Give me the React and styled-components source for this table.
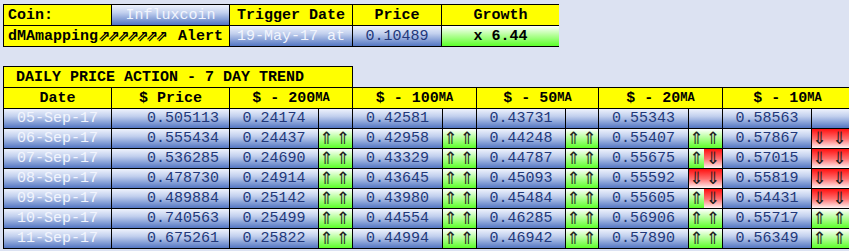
import styled, { createGlobalStyle, css } from 'styled-components';

const GlobalStyle = createGlobalStyle`
  html, body {
    margin: 0;
    background: #dce2f2;
    overflow: hidden;
  }
  body {
    font-family: 'Liberation Mono', 'Courier New', monospace;
    font-size: 15px;
  }
`;

const tones = {
  yellow: css`background: #ffff00;`,
  blue: css`background: linear-gradient(180deg, #eef2fc 0%, #c2d0ee 38%, #5376c2 100%);`,
  green: css`background: linear-gradient(180deg, #ffffff 0%, #b6ff9a 45%, #5cff2a 100%);`,
  red: css`background: linear-gradient(180deg, #ff1010 0%, #ff6a6a 50%, #fff2f2 100%);`,
};

const Page = styled.div`
  padding: 4px 0 0 3px;
  display: flex;
  flex-direction: column;
  gap: 19px;
`;

const SummaryGrid = styled.div`
  display: grid;
  grid-template-columns: 107px 117px 122px 88px 117px;
  grid-auto-rows: 20px;
  gap: 1px;
  padding: 1px 0 1px 1px;
  background: #000;
  width: fit-content;
`;

const TrendBlock = styled.div`
  display: flex;
  flex-direction: column;
`;

const TrendTitle = styled.div`
  width: 350px;
  height: 21px;
  box-sizing: border-box;
  border: 1px solid #000;
  border-bottom: none;
  background: #ffff00;
  font-weight: bold;
  padding-left: 12px;
  display: flex;
  align-items: center;
  white-space: pre;
`;

const TrendGrid = styled.div`
  display: grid;
  grid-template-columns: 107px 117px 88px 33px 89px 33px 88px 32px 89px 33px 88px 40px;
  grid-template-rows: 20px;
  grid-auto-rows: 19px;
  gap: 1px;
  padding: 1px 0 1px 1px;
  background: #000;
  width: fit-content;
`;

const Cell = styled.div`
  ${({ $tone }) => tones[$tone || 'yellow']}
  grid-column: span ${({ $span }) => $span || 1};
  display: flex;
  align-items: center;
  justify-content: ${({ $align }) =>
    $align === 'left' ? 'flex-start' : $align === 'right' ? 'flex-end' : 'center'};
  padding: ${({ $align }) => ($align === 'left' ? '0 0 0 4px' : $align === 'right' ? '0 10px 0 0' : '0')};
  font-weight: ${({ $bold }) => ($bold ? 'bold' : 'normal')};
  color: ${({ $ink }) => ($ink === 'light' ? '#f2f5fd' : $ink === 'navy' ? '#22387a' : '#000')};
  white-space: pre;
  overflow: hidden;
`;

const Small = styled.span`
  font-size: 12px;
`;

const AlertArrows = styled.span`
  font-family: 'DejaVu Sans', sans-serif;
  font-size: 15px;
  font-weight: bold;
  letter-spacing: -3px;
  line-height: 18px;
  margin-right: 4px;
`;

const ArrowCell = styled.div`
  display: flex;
  ${tones.blue}
`;

const Half = styled.div`
  ${({ $dir }) => ($dir === 'u' ? tones.green : $dir === 'd' ? tones.red : '')}
  flex: ${({ $first }) => ($first ? '0 0 15px' : '1')};
  display: flex;
  align-items: center;
  justify-content: center;
  font-family: 'DejaVu Sans', sans-serif;
  font-size: 17px;
  line-height: 19px;
  color: #1e1e1e;
`;

const glyph = { u: '⇑', d: '⇓' };

const Arrows = ({ pair }) => (
  <ArrowCell>
    {pair && (
      <>
        <Half $first $dir={pair[0]}>{glyph[pair[0]]}</Half>
        <Half $dir={pair[1]}>{glyph[pair[1]]}</Half>
      </>
    )}
  </ArrowCell>
);

const rows = [
  ['05-Sep-17', '0.505113', ['0.24174', null], ['0.42581', null], ['0.43731', null], ['0.55343', null], ['0.58563', null]],
  ['06-Sep-17', '0.555434', ['0.24437', 'uu'], ['0.42958', 'uu'], ['0.44248', 'uu'], ['0.55407', 'uu'], ['0.57867', 'dd']],
  ['07-Sep-17', '0.536285', ['0.24690', 'uu'], ['0.43329', 'uu'], ['0.44787', 'uu'], ['0.55675', 'ud'], ['0.57015', 'dd']],
  ['08-Sep-17', '0.478730', ['0.24914', 'uu'], ['0.43645', 'uu'], ['0.45093', 'uu'], ['0.55592', 'dd'], ['0.55819', 'dd']],
  ['09-Sep-17', '0.489884', ['0.25142', 'uu'], ['0.43980', 'uu'], ['0.45484', 'uu'], ['0.55605', 'ud'], ['0.54431', 'dd']],
  ['10-Sep-17', '0.740563', ['0.25499', 'uu'], ['0.44554', 'uu'], ['0.46285', 'uu'], ['0.56906', 'uu'], ['0.55717', 'uu']],
  ['11-Sep-17', '0.675261', ['0.25822', 'uu'], ['0.44994', 'uu'], ['0.46942', 'uu'], ['0.57890', 'uu'], ['0.56349', 'uu']],
];

const averages = ['200', '100', '50', '20', '10'];

export default function App() {
  return (
    <>
      <GlobalStyle />
      <Page>
        <SummaryGrid>
          <Cell $align="left" $bold>Coin:</Cell>
          <Cell $tone="blue" $ink="light">Influxcoin</Cell>
          <Cell $bold>Trigger Date</Cell>
          <Cell $bold>Price</Cell>
          <Cell $bold>Growth</Cell>
          <Cell $span={2} $align="left" $bold>
            dMAmapping<AlertArrows>⇗⇗⇗⇗⇗⇗⇗</AlertArrows> Alert
          </Cell>
          <Cell $tone="blue" $ink="light">19-May-17 at</Cell>
          <Cell $tone="blue" $ink="navy">0.10489</Cell>
          <Cell $tone="green" $bold>x 6.44</Cell>
        </SummaryGrid>

        <TrendBlock>
          <TrendTitle>DAILY PRICE ACTION - 7 DAY TREND</TrendTitle>
          <TrendGrid>
            <Cell $bold>Date</Cell>
            <Cell $bold>$ Price</Cell>
            {averages.map((n) => (
              <Cell key={n} $span={2} $bold>
                $ - {n}<Small>MA</Small>
              </Cell>
            ))}
            {rows.map(([date, price, ...mas]) => (
              <>
                <Cell key={date} $tone="blue" $ink="light">{date}</Cell>
                <Cell $tone="blue" $ink="navy" $align="right">{price}</Cell>
                {mas.map(([value, pair], i) => (
                  <>
                    <Cell key={`v${i}`} $tone="blue" $ink="navy">{value}</Cell>
                    <Arrows key={`a${i}`} pair={pair} />
                  </>
                ))}
              </>
            ))}
          </TrendGrid>
        </TrendBlock>
      </Page>
    </>
  );
}
